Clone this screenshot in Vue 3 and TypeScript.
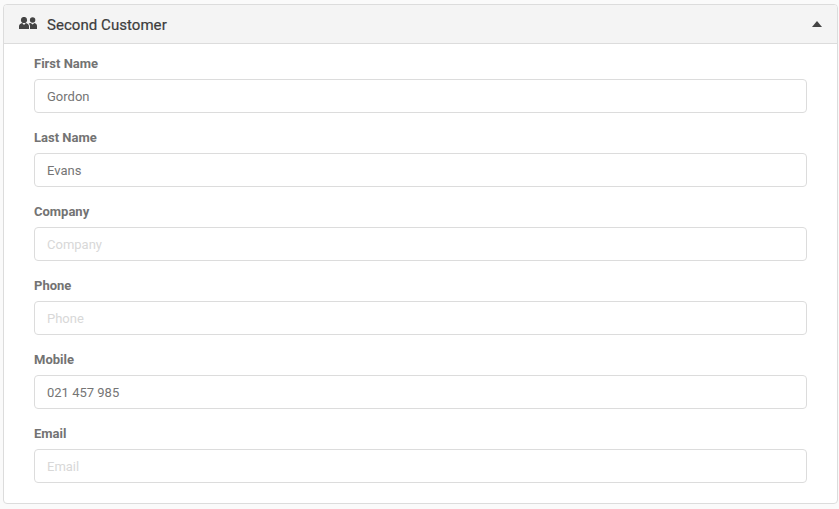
<script setup lang="ts">
interface Field {
  label: string;
  value: string;
}

const fields: Field[] = [
  { label: "First Name", value: "Gordon" },
  { label: "Last Name", value: "Evans" },
  { label: "Company", value: "" },
  { label: "Phone", value: "" },
  { label: "Mobile", value: "021 457 985" },
  { label: "Email", value: "" },
];
</script>

<template>
  <div class="page">
    <section class="panel">
      <header class="panel-head">
        <svg class="users" width="18" height="12" viewBox="0 0 18 12">
          <circle cx="5" cy="3" r="3.1" />
          <circle cx="13.6" cy="3" r="2.7" />
          <path d="M0 12V9.4C0 7.6 1.4 6.6 3.2 6.1L5 8L6.8 6.1C8.6 6.6 10 7.6 10 9.4V12Z" />
          <path d="M11 12V9.2C11 8 10.4 7 9.6 6.4L11.8 5.9L13.6 7.6L15.4 5.9C17 6.3 18 7.4 18 9V12Z" />
        </svg>
        <h2 class="title">Second Customer</h2>
        <span class="caret"></span>
      </header>
      <form class="panel-body">
        <div v-for="field in fields" :key="field.label" class="field">
          <label class="label">{{ field.label }}</label>
          <input class="input" type="text" :value="field.value" :placeholder="field.label" />
        </div>
      </form>
    </section>
  </div>
</template>

<style>
html,
body {
  background: #fafafa;
}
</style>

<style scoped>
.page {
  padding: 4px 1px 0 3px;
  font-family: Roboto, "Liberation Sans", sans-serif;
}

.panel {
  background: #fff;
  border: 1px solid #dcdcdc;
  border-radius: 4px;
  overflow: hidden;
}

.panel-head {
  display: flex;
  align-items: center;
  height: 39px;
  padding: 0 15px;
  background: #f4f4f4;
  border-bottom: 1px solid #dcdcdc;
  box-sizing: border-box;
}

.users {
  fill: #444;
  margin-right: 10px;
  margin-top: -3px;
}

.title {
  flex: 1;
  margin: 2px 0 0;
  font-size: 15px;
  font-weight: 400;
  letter-spacing: 0.05px;
  color: #3d3d3d;
  -webkit-text-stroke: 0.2px #3d3d3d;
}

.caret {
  width: 0;
  height: 0;
  border-left: 5.5px solid transparent;
  border-right: 5.5px solid transparent;
  border-bottom: 6px solid #444;
}

.panel-body {
  display: flex;
  flex-direction: column;
  gap: 16px;
  padding: 11px 30px 20px;
}

.field {
  display: flex;
  flex-direction: column;
}

.label {
  height: 24px;
  font-size: 13px;
  font-weight: 700;
  line-height: 17px;
  color: #737373;
}

.input {
  height: 34px;
  padding: 0 12px;
  box-sizing: border-box;
  background: #fff;
  border: 1px solid #dcdcdc;
  border-radius: 4px;
  outline: none;
  font-family: inherit;
  font-size: 13px;
  color: #757575;
}

.input::placeholder {
  color: #d8d8d8;
  opacity: 1;
}
</style>
